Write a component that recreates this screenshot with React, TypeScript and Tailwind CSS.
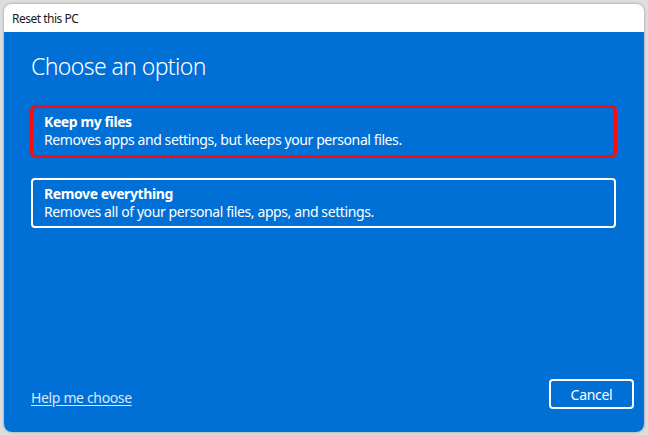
import React from "react";

const font = { fontFamily: '"Noto Sans", "Open Sans", sans-serif' };

export default function App() {
  return (
    <div className="w-[648px] h-[435px] bg-[#dedede] pt-[4px] pl-[4px]" style={font}>
      <div className="w-[640px] h-[428px] rounded-[8px] overflow-hidden flex flex-col shadow-[0_0_3px_rgba(0,0,0,0.35)]">
        <div className="h-[28px] bg-white flex items-center pl-[8px] pt-[1px] text-[12px] tracking-[-0.5px] text-[#1a1a1a] shrink-0">
          Reset this PC
        </div>
        <div className="flex-1 bg-[#006fd6] flex flex-col text-white pl-[27px] pr-[10px]">
          <div className="text-[23px] leading-[32px] font-light pt-[18px] tracking-[-0.6px]">Choose an option</div>
          <div className="flex flex-col mt-[23px] mr-[18px] gap-[20px] tracking-[-0.4px]">
            <div className="mx-[-1px] border-[3px] border-[#ff0a0a] rounded-[6px] pl-[11px] pt-[5px] pb-[6px] text-[14px] leading-[18px]">
              <div className="font-bold">Keep my files</div>
              <div>Removes apps and settings, but keeps your personal files.</div>
            </div>
            <div className="border-2 border-white rounded-[4px] pl-[11px] pt-[5px] pb-[5px] text-[14px] leading-[18px]">
              <div className="font-bold">Remove everything</div>
              <div>Removes all of your personal files, apps, and settings.</div>
            </div>
          </div>
          <div className="flex-1" />
          <div className="flex items-center justify-between pb-[23px]">
            <a className="text-[14px] leading-[18px] tracking-[-0.35px] text-[#d6e9ff] underline underline-offset-2 mt-[7px]">Help me choose</a>
            <button className="w-[85px] h-[30px] border-2 border-white rounded-[4px] text-[14px] tracking-[-0.3px] text-white flex items-center justify-center">
              Cancel
            </button>
          </div>
        </div>
      </div>
    </div>
  );
}
